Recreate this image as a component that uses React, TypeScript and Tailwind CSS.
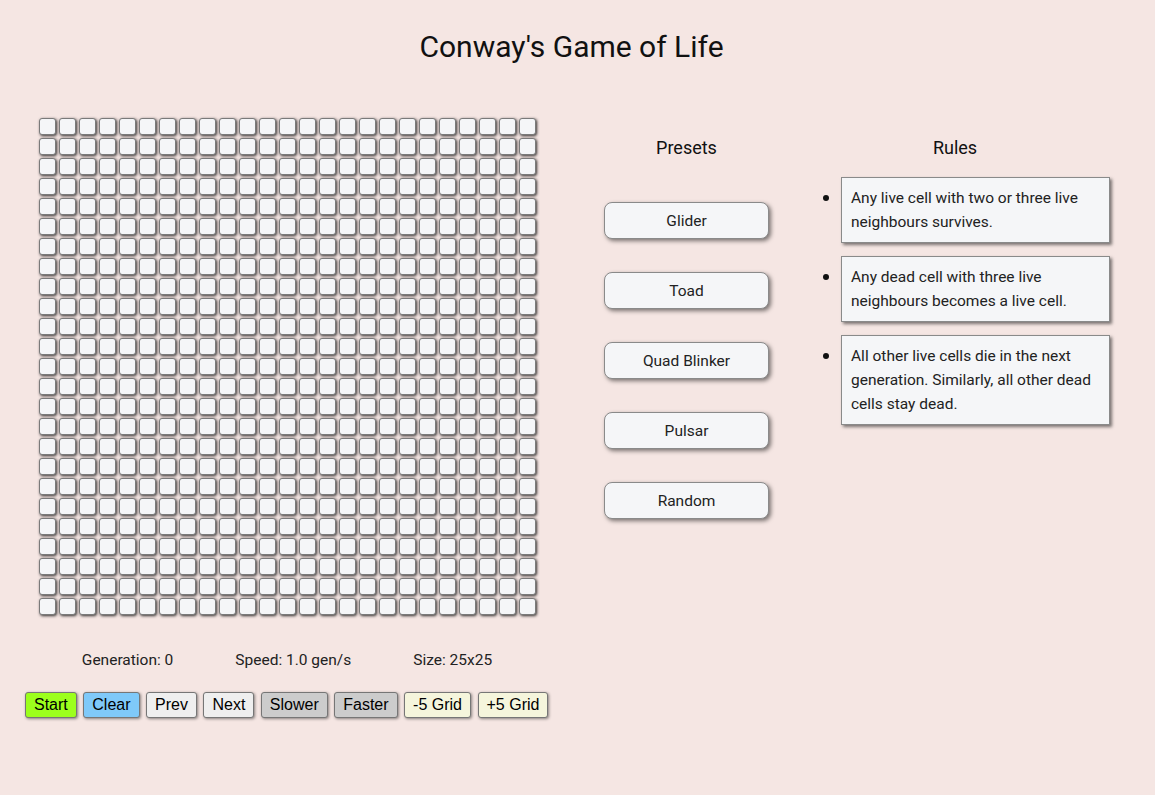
import React from "react";

const N = 25;

function Cell() {
  return (
    <div className="w-[17px] h-[17px] rounded-[3px] bg-[#f5f6f8] border border-[#7a7a7a] shadow-[1px_1px_3px_rgba(0,0,0,0.8)]" />
  );
}

const presets = ["Glider", "Toad", "Quad Blinker", "Pulsar", "Random"];
const rules = [
  "Any live cell with two or three live neighbours survives.",
  "Any dead cell with three live neighbours becomes a live cell.",
  "All other live cells die in the next generation. Similarly, all other dead cells stay dead.",
];

const controls: { label: string; cls: string }[] = [
  { label: "Start", cls: "bg-[#9cff1c]" },
  { label: "Clear", cls: "bg-[#7fc9f9]" },
  { label: "Prev", cls: "bg-[#efefef]" },
  { label: "Next", cls: "bg-[#efefef]" },
  { label: "Slower", cls: "bg-[#cccccc]" },
  { label: "Faster", cls: "bg-[#cccccc]" },
  { label: "-5 Grid", cls: "bg-[#f5f5dc]" },
  { label: "+5 Grid", cls: "bg-[#f5f5dc]" },
];

export default function App() {
  return (
    <div
      className="w-[1155px] h-[795px] bg-[#f5e6e3] text-[#111] overflow-hidden"
      style={{ fontFamily: "Roboto, 'Noto Sans', sans-serif" }}
    >
      <h1 className="text-center text-[30px] leading-none pt-[32px] pr-[12px] text-[#111]">
        Conway's Game of Life
      </h1>
      <div className="flex mt-[56px]">
        {/* left column */}
        <div className="w-[524px] ml-[25px] flex flex-col items-center">
          <div className="grid grid-cols-[repeat(25,17px)] gap-[3px]">
            {Array.from({ length: N * N }).map((_, i) => (
              <Cell key={i} />
            ))}
          </div>
          <div className="flex gap-[62px] mt-[35px] text-[15.5px] leading-[20px] text-[#222]">
            <span>Generation: 0</span>
            <span>Speed: 1.0 gen/s</span>
            <span>Size: 25x25</span>
          </div>
          <div
            className="flex gap-[6.5px] mt-[22px] self-start"
            style={{ fontFamily: "'Liberation Sans', Arial, sans-serif" }}
          >
            {controls.map((c) => (
              <button
                key={c.label}
                className={`${c.cls} h-[26px] px-[8px] text-[16px] leading-none text-black border border-[#767676] rounded-[3px] shadow-[1px_1px_3px_rgba(0,0,0,0.45)]`}
              >
                {c.label}
              </button>
            ))}
          </div>
        </div>
        {/* presets */}
        <div className="w-[165px] ml-[55px] flex flex-col items-center">
          <div className="text-[18px] leading-[24px] mt-[18px]">Presets</div>
          <div className="flex flex-col gap-[33px] mt-[42px]">
            {presets.map((p) => (
              <button
                key={p}
                className="w-[165px] h-[37px] rounded-[8px] bg-[#f5f6f8] border border-[#8a8a8a] shadow-[2px_2px_4px_rgba(0,0,0,0.5)] text-[15.5px] text-[#222] pt-[2px]"
              >
                {p}
              </button>
            ))}
          </div>
        </div>
        {/* rules */}
        <div className="ml-[41px] w-[300px] flex flex-col">
          <div className="text-[18px] leading-[24px] mt-[18px] text-center w-[270px] ml-[10px]">
            Rules
          </div>
          <ul className="list-disc pl-[31px] mt-[17px] flex flex-col gap-[13px]">
            {rules.map((r) => (
              <li key={r} className="marker:text-[18px]">
                <div className="w-[269px] border border-[#8a8a8a] bg-[#f5f6f8] shadow-[2px_2px_3px_rgba(0,0,0,0.5)] px-[9px] py-[8px] text-[15.5px] leading-[24px] text-[#222]">
                  {r}
                </div>
              </li>
            ))}
          </ul>
        </div>
      </div>
    </div>
  );
}
